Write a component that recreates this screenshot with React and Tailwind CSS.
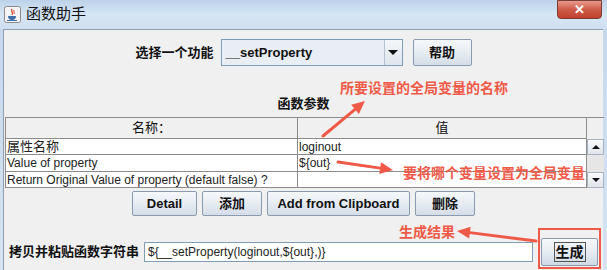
import React from 'react';

const cjk = { fontFamily: '"Liberation Sans", "Noto Sans CJK SC", sans-serif' };

const Btn = ({ children, className = '' }) => (
  <div
    className={`flex items-center justify-center h-[25px] border border-[#8a9bb0] rounded-[2px] bg-gradient-to-b from-[#f6f8fa] via-[#e7ecf2] to-[#d4dde8] text-[13px] font-bold text-[#111] ${className}`}
  >
    {children}
  </div>
);

const JavaIcon = () => (
  <svg width="17" height="17" viewBox="0 0 17 17">
    <rect x="0.5" y="0.5" width="16" height="16" rx="2" fill="#f4f4f4" stroke="#8b8b8b" />
    <path d="M8 3 C6 5 10 6 8 9" stroke="#d2452a" strokeWidth="1.3" fill="none" />
    <path d="M10 4 C9 6 11 6 10 8" stroke="#d2452a" strokeWidth="1" fill="none" />
    <path d="M4 10 H12 C12 13 10 14 8 14 C6 14 4 13 4 10 Z" fill="#3d6ea8" />
    <path d="M3 14.5 H13" stroke="#3d6ea8" strokeWidth="1" />
  </svg>
);

const Arrow = ({ x1, y1, x2, y2 }) => {
  const a = Math.atan2(y2 - y1, x2 - x1);
  const L = 13;
  const W = 6;
  const bx = x2 - L * Math.cos(a);
  const by = y2 - L * Math.sin(a);
  const px = -Math.sin(a) * W;
  const py = Math.cos(a) * W;
  return (
    <g>
      <line x1={x1} y1={y1} x2={bx} y2={by} stroke="#ef5a48" strokeWidth="3" strokeLinecap="round" />
      <polygon points={`${x2},${y2} ${bx + px},${by + py} ${bx - px},${by - py}`} fill="#ef5a48" />
    </g>
  );
};

export default function App() {
  return (
    <div className="relative w-[607px] h-[270px] overflow-hidden bg-gradient-to-b from-[#c3d7ec] to-[#d6e4f3]" style={cjk}>
      {/* title bar */}
      <div className="h-[29px] flex items-center pl-[4px] bg-gradient-to-b from-[#bcd2ea] via-[#d7e6f5] to-[#cfdff0]">
        <JavaIcon />
        <span className="ml-[5px] text-[15px] text-[#111]">函数助手</span>
        <div className="ml-auto mr-[5px] self-start w-[45px] h-[19px] rounded-b-[4px] border border-[#7a3b33] bg-gradient-to-b from-[#e99a8b] via-[#cf5a49] to-[#c2412f] flex items-center justify-center text-white font-bold text-[13px] leading-none">
          ✕
        </div>
      </div>

      {/* content panel */}
      <div className="ml-[3px] mr-[4px] h-[241px] bg-[#f0f0f0] border-t border-l border-[#8e9fb2] flex flex-col">
        {/* function select row */}
        <div className="flex items-center justify-center mt-[9px] h-[27px]">
          <span className="text-[13px] font-bold text-[#111] mr-[7px]">选择一个功能</span>
          <div className="flex w-[182px] h-[27px] border border-[#7f9db9] bg-[#e9eef4]">
            <div className="flex-1 flex items-center pl-[4px] text-[13px] font-bold text-[#111]">__setProperty</div>
            <div className="w-[18px] border-l border-[#b4c2d2] bg-gradient-to-b from-[#f4f6f9] to-[#dfe6ee] flex items-center justify-center">
              <div className="w-0 h-0 border-l-[5px] border-r-[5px] border-t-[5px] border-l-transparent border-r-transparent border-t-[#111]" />
            </div>
          </div>
          <Btn className="ml-[10px] w-[59px] h-[27px]">帮助</Btn>
        </div>

        {/* section label */}
        <div className="mt-[31px] text-center text-[13px] font-bold text-[#111] leading-none">函数参数</div>

        {/* table */}
        <div className="mt-[7px] mr-[-1px] ml-[1px] border-t border-l border-[#8c8c8c] flex">
          <div className="flex-1 flex flex-col">
            <div className="flex h-[21px] bg-[#f0f0f0] border-b border-[#8c8c8c] text-[13px] text-[#111]">
              <div className="w-[292px] border-r border-[#8c8c8c] flex items-center justify-center">名称：</div>
              <div className="flex-1 flex items-center justify-center border-r border-[#8c8c8c]">值</div>
            </div>
            <div className="bg-white text-[12px] text-[#222] leading-none">
              {[
                ['属性名称', 'loginout', 'h-[16px]'],
                ['Value of property', '${out}', 'h-[17px]'],
                ['Return Original Value of property (default false) ?', '', 'h-[16px]'],
              ].map(([k, v, h]) => (
                <div key={k} className={`flex ${h} border-b border-[#8c8c8c]`}>
                  <div className={`w-[292px] border-r border-[#8c8c8c] flex items-center pl-[1px] ${k === '属性名称' ? 'text-[13px]' : ''}`}>{k}</div>
                  <div className="flex-1 flex items-center pl-[1px] border-r border-[#8c8c8c]">{v}</div>
                </div>
              ))}
            </div>
          </div>
          <div className="w-[17px] flex flex-col">
            <div className="h-[21px]" />
            <div className="h-[16px] border border-[#a9b3bf] bg-gradient-to-b from-[#f7f8fa] to-[#e1e5ea] flex items-center justify-center">
              <div className="w-0 h-0 border-l-[4px] border-r-[4px] border-b-[4px] border-l-transparent border-r-transparent border-b-[#111]" />
            </div>
            <div className="flex-1 bg-[#e6e6e6]" />
            <div className="h-[16px] border border-[#a9b3bf] bg-gradient-to-b from-[#f7f8fa] to-[#e1e5ea] flex items-center justify-center">
              <div className="w-0 h-0 border-l-[4px] border-r-[4px] border-t-[4px] border-l-transparent border-r-transparent border-t-[#111]" />
            </div>
          </div>
        </div>

        {/* action buttons */}
        <div className="mt-[3px] flex justify-center gap-[5px]">
          <Btn className="w-[65px]">Detail</Btn>
          <Btn className="w-[60px]">添加</Btn>
          <Btn className="w-[143px]">Add from Clipboard</Btn>
          <Btn className="w-[60px]">删除</Btn>
        </div>

        {/* result row */}
        <div className="mt-[22px] flex items-center pl-[5px]">
          <span className="text-[13px] font-bold text-[#111] w-[135px]">拷贝并粘贴函数字符串</span>
          <div className="w-[389px] h-[20px] border border-[#7f9db9] bg-white flex items-center pl-[3px] text-[12px] text-[#222]">
            {'${__setProperty(loginout,${out},)}'}
          </div>
          <div className="ml-[8px] w-[57px] h-[28px] border border-[#8a9bb0] rounded-[2px] bg-gradient-to-b from-[#f6f8fa] via-[#e7ecf2] to-[#cfd9e5] flex items-center justify-center">
            <span className="border border-[#555] px-[1px] text-[14px] font-bold leading-[18px] text-[#111]">生成</span>
          </div>
        </div>
      </div>

      {/* annotations */}
      <div className="absolute left-[340px] top-[81px] text-[14px] font-bold text-[#ef5a48] leading-none">所要设置的全局变量的名称</div>
      <div className="absolute left-[403px] top-[166px] text-[14px] font-bold text-[#ef5a48] leading-none">要将哪个变量设置为全局变量</div>
      <div className="absolute left-[399px] top-[225px] text-[14px] font-bold text-[#ef5a48] leading-none">生成结果</div>
      <div className="absolute left-[538px] top-[228px] w-[63px] h-[41px] border-2 border-[#ef5a48]" />
      <svg className="absolute left-0 top-0 pointer-events-none" width="607" height="270">
        <Arrow x1={323} y1={136} x2={365} y2={101} />
        <Arrow x1={338} y1={162} x2={393} y2={170} />
        <Arrow x1={536} y1={241} x2={457} y2={231} />
      </svg>
    </div>
  );
}
